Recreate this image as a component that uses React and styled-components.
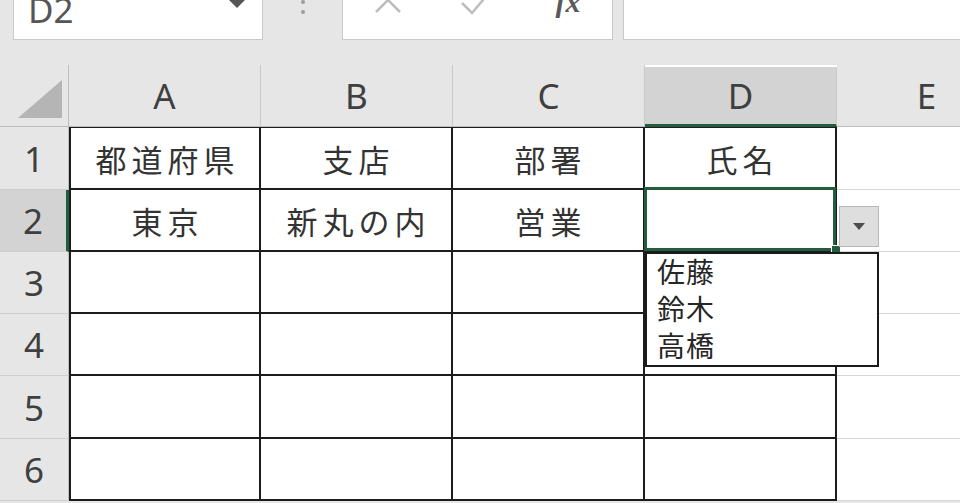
import React from 'react';
import styled, { createGlobalStyle } from 'styled-components';

const Global = createGlobalStyle`
  html, body { margin: 0; padding: 0; background: #fff; overflow: hidden; }
  #root { width: 960px; height: 503px; }
`;

const GREEN = '#245c3e';

const Page = styled.div`
  width: 960px;
  height: 503px;
  overflow: hidden;
  background: #e6e6e6;
  display: flex;
  flex-direction: column;
  font-family: "Noto Sans", "Noto Sans CJK JP", sans-serif;
`;

const TopBar = styled.div`
  height: 65px;
  flex: none;
  display: flex;
  align-items: flex-start;
  padding-left: 13px;
`;

const Field = styled.div`
  height: 40px;
  box-sizing: border-box;
  background: #fff;
  border: 1px solid #c9c9c9;
  border-top: none;
  display: flex;
  align-items: flex-start;
  overflow: hidden;
  flex: none;
`;

const NameBox = styled(Field)`
  width: 250px;
  justify-content: space-between;
  padding: 0 16px 0 14px;
`;

const NameText = styled.span`
  font-size: 35px;
  line-height: 35px;
  margin-top: -8px;
  color: #555;
`;

const Caret = styled.svg`
  margin-top: -1px;
  flex: none;
`;

const Dots = styled.div`
  width: 79px;
  flex: none;
  display: flex;
  flex-direction: column;
  align-items: center;
  gap: 6px;
`;

const Dot = styled.span`
  width: 4px;
  height: 4px;
  border-radius: 50%;
  background: #9c9c9c;
`;

const FormulaButtons = styled(Field)`
  width: 271px;
  display: grid;
  grid-template-columns: repeat(3, 90px);
  justify-items: center;
  align-items: start;
`;

const IconSvg = styled.svg`
  margin-top: -15px;
`;

const Fx = styled.span`
  font-family: "Liberation Serif", serif;
  font-style: italic;
  font-weight: bold;
  font-size: 30px;
  line-height: 30px;
  margin-top: -13px;
  color: #5a5a5a;
`;

const FormulaInput = styled(Field)`
  flex: 1;
  margin-left: 10px;
  border-right: none;
`;

const Sheet = styled.div`
  display: grid;
  grid-template-columns: 69px repeat(4, 192px) 180px;
  grid-template-rows: 62px 63px 62px 62px 62px 63px 62px;
  background: #fff;
  flex: none;
`;

const Corner = styled.div`
  background: #e6e6e6;
  border-right: 1px solid #bdbdbd;
  border-bottom: 1px solid #bdbdbd;
  display: flex;
  justify-content: flex-end;
  align-items: flex-end;
  padding: 0 6px 8px 0;
`;

const ColHead = styled.div`
  background: ${p => (p.$active ? '#d3d3d3' : '#e6e6e6')};
  border-right: 1px solid #c9c9c9;
  border-bottom: ${p => (p.$active ? `3px solid ${GREEN}` : '1px solid #bdbdbd')};
  margin-top: ${p => (p.$active ? '2px' : '0')};
  display: flex;
  align-items: center;
  justify-content: center;
  font-size: 35px;
  color: #3f3f3f;
`;

const RowHead = styled.div`
  background: ${p => (p.$active ? '#d3d3d3' : '#e6e6e6')};
  border-right: ${p => (p.$active ? `3px solid ${GREEN}` : '1px solid #bdbdbd')};
  border-bottom: 1px solid #cfcfcf;
  display: flex;
  align-items: center;
  justify-content: center;
  font-size: 35px;
  color: #3f3f3f;
`;

const Cell = styled.div`
  position: relative;
  background: #fff;
  border-right: 2px solid #1c1c1c;
  border-bottom: 2px solid #1c1c1c;
  border-left: ${p => (p.$first ? '2px solid #1c1c1c' : 'none')};
  border-top: ${p => (p.$top ? '1px solid #1c1c1c' : 'none')};
  display: flex;
  align-items: center;
  justify-content: center;
  font-family: "Noto Sans CJK JP", "Noto Sans", sans-serif;
  font-size: 31px;
  letter-spacing: 5px;
  padding-left: 5px;
  color: #333;
`;

const PlainCell = styled.div`
  background: #fff;
  border-bottom: 1px solid #d6d6d6;
`;

const SelectionFrame = styled.div`
  position: absolute;
  top: -3px;
  left: -1px;
  right: -1px;
  bottom: -1px;
  border: 3px solid ${GREEN};
  pointer-events: none;
`;

const FillHandle = styled.div`
  position: absolute;
  right: -5px;
  bottom: -4px;
  width: 8px;
  height: 8px;
  background: ${GREEN};
  border-left: 1px solid #fff;
  border-top: 1px solid #fff;
`;

const DropButton = styled.div`
  position: absolute;
  left: calc(100% + 4px);
  top: 16px;
  width: 40px;
  height: 41px;
  box-sizing: border-box;
  background: #dedede;
  border: 1px solid #b8b8b8;
  display: flex;
  align-items: center;
  justify-content: center;
`;

const DropList = styled.ul`
  position: absolute;
  left: 0;
  top: 62px;
  width: 234px;
  height: 115px;
  box-sizing: border-box;
  margin: 0;
  padding: 0 0 0 10px;
  list-style: none;
  background: #fff;
  border: 2px solid #1a1a1a;
  z-index: 2;
  font-family: "Noto Sans CJK JP", sans-serif;
  font-size: 28px;
  line-height: 37px;
  letter-spacing: 1px;
  color: #262626;
  text-align: left;
`;

const DropItem = styled.li`
  margin-top: ${p => (p.$first ? '-1px' : '0')};
`;

const columns = ['A', 'B', 'C', 'D'];
const rows = [
  ['都道府県', '支店', '部署', '氏名'],
  ['東京', '新丸の内', '営業', ''],
  ['', '', '', ''],
  ['', '', '', ''],
  ['', '', '', ''],
  ['', '', '', ''],
];
const names = ['佐藤', '鈴木', '高橋'];

function SelectedCell() {
  return (
    <Cell>
      <SelectionFrame />
      <FillHandle />
      <DropButton>
        <svg width="12" height="7" viewBox="0 0 12 7">
          <polygon points="0,0 12,0 6,7" fill="#4d4d4d" />
        </svg>
      </DropButton>
      <DropList>
        {names.map((n, i) => (
          <DropItem key={n} $first={i === 0}>{n}</DropItem>
        ))}
      </DropList>
    </Cell>
  );
}

export default function App() {
  return (
    <Page>
      <Global />
      <TopBar>
        <NameBox>
          <NameText>D2</NameText>
          <Caret width="18" height="9" viewBox="0 0 18 9">
            <polygon points="0,0 18,0 9,9" fill="#555" />
          </Caret>
        </NameBox>
        <Dots>
          <Dot />
          <Dot />
        </Dots>
        <FormulaButtons>
          <IconSvg width="30" height="30" viewBox="0 0 30 30">
            <path d="M3 3 L27 27 M27 3 L3 27" stroke="#bdbdbd" strokeWidth="2.5" fill="none" />
          </IconSvg>
          <IconSvg width="36" height="30" viewBox="0 0 36 30">
            <path d="M2 18 L12 28 L34 2" stroke="#bdbdbd" strokeWidth="2.5" fill="none" />
          </IconSvg>
          <Fx>fx</Fx>
        </FormulaButtons>
        <FormulaInput />
      </TopBar>
      <Sheet>
        <Corner>
          <svg width="44" height="38" viewBox="0 0 44 38">
            <polygon points="44,0 44,38 0,38" fill="#b5b5b5" />
          </svg>
        </Corner>
        {columns.map(c => (
          <ColHead key={c} $active={c === 'D'}>{c}</ColHead>
        ))}
        <ColHead>E</ColHead>
        {rows.map((r, ri) => (
          <React.Fragment key={ri}>
            <RowHead $active={ri === 1}>{ri + 1}</RowHead>
            {r.map((v, ci) =>
              ri === 1 && ci === 3 ? (
                <SelectedCell key={ci} />
              ) : (
                <Cell key={ci} $first={ci === 0} $top={ri === 0}>{v}</Cell>
              )
            )}
            <PlainCell />
          </React.Fragment>
        ))}
      </Sheet>
    </Page>
  );
}
